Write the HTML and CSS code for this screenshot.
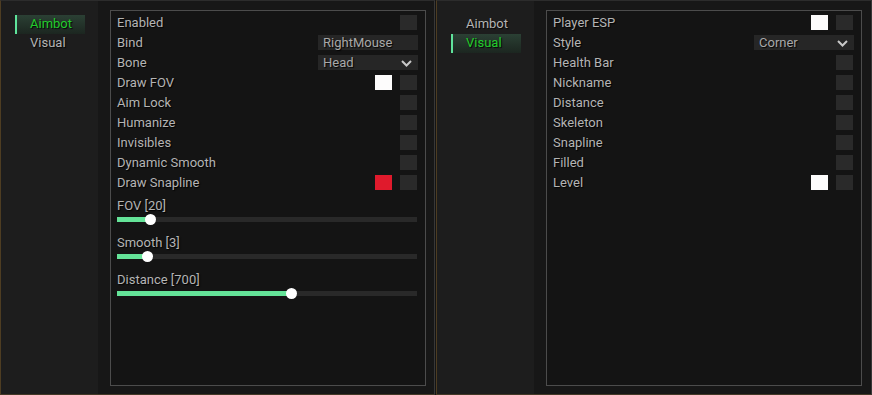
FILE: index.html
```html
<!DOCTYPE html>
<html>
<head>
<meta charset="utf-8">
<link rel="stylesheet" href="styles.css">
</head>
<body>
<div class="desk">
  <div class="window window-left">
    <aside class="sidebar">
      <div class="tab active">Aimbot</div>
      <div class="tab">Visual</div>
    </aside>
    <main class="content">
      <div class="panel">
        <div class="row"><span class="label">Enabled</span><span class="check"></span></div>
        <div class="row"><span class="label">Bind</span><span class="field">RightMouse</span></div>
        <div class="row"><span class="label">Bone</span><span class="field select">Head<svg class="chev" width="11" height="7" viewBox="0 0 11 7"><polyline points="1,1 5.5,5.5 10,1" fill="none" stroke="#c8c8c8" stroke-width="2"/></svg></span></div>
        <div class="row"><span class="label">Draw FOV</span><span class="swatch white"></span><span class="check"></span></div>
        <div class="row"><span class="label">Aim Lock</span><span class="check"></span></div>
        <div class="row"><span class="label">Humanize</span><span class="check"></span></div>
        <div class="row"><span class="label">Invisibles</span><span class="check"></span></div>
        <div class="row"><span class="label">Dynamic Smooth</span><span class="check"></span></div>
        <div class="row"><span class="label">Draw Snapline</span><span class="swatch red"></span><span class="check"></span></div>
        <div class="slider">
          <div class="slider-label">FOV [20]</div>
          <div class="track"><div class="fill" style="width: 11%"></div><div class="knob" style="left: 11%"></div></div>
        </div>
        <div class="slider">
          <div class="slider-label">Smooth [3]</div>
          <div class="track"><div class="fill" style="width: 10%"></div><div class="knob" style="left: 10%"></div></div>
        </div>
        <div class="slider">
          <div class="slider-label">Distance [700]</div>
          <div class="track"><div class="fill" style="width: 58.3%"></div><div class="knob" style="left: 58.3%"></div></div>
        </div>
      </div>
    </main>
  </div>
  <div class="window window-right">
    <aside class="sidebar">
      <div class="tab">Aimbot</div>
      <div class="tab active">Visual</div>
    </aside>
    <main class="content">
      <div class="panel">
        <div class="row"><span class="label">Player ESP</span><span class="swatch white"></span><span class="check"></span></div>
        <div class="row"><span class="label">Style</span><span class="field select">Corner<svg class="chev" width="11" height="7" viewBox="0 0 11 7"><polyline points="1,1 5.5,5.5 10,1" fill="none" stroke="#c8c8c8" stroke-width="2"/></svg></span></div>
        <div class="row"><span class="label">Health Bar</span><span class="check"></span></div>
        <div class="row"><span class="label">Nickname</span><span class="check"></span></div>
        <div class="row"><span class="label">Distance</span><span class="check"></span></div>
        <div class="row"><span class="label">Skeleton</span><span class="check"></span></div>
        <div class="row"><span class="label">Snapline</span><span class="check"></span></div>
        <div class="row"><span class="label">Filled</span><span class="check"></span></div>
        <div class="row"><span class="label">Level</span><span class="swatch white"></span><span class="check"></span></div>
      </div>
    </main>
  </div>
</div>
</body>
</html>
```
FILE: styles.css
```css
* { box-sizing: border-box; }
html, body { margin: 0; padding: 0; }
body {
  background: #151515;
  font-family: Roboto, "Liberation Sans", sans-serif;
  font-size: 13px;
  color: #b4b4b4;
}
.desk {
  display: flex;
  gap: 1px;
  width: 872px;
  height: 395px;
  background: #141414;
}
.window {
  display: flex;
  height: 395px;
  border: 1px solid #333;
  border-top-color: #2c2c2c;
  border-right-color: #383838;
  border-left-color: #4e3d22;
  border-bottom-color: #433826;
}
.window-left { width: 435px; }
.window-right { width: 436px; }
.sidebar {
  width: 97px;
  flex: none;
  background: #1d1d1d;
  padding: 14px 0 0 14px;
}
.tab {
  width: 70px;
  height: 19px;
  line-height: 18px;
  padding-left: 13px;
  border-left: 2px solid transparent;
  text-shadow: 1px 1px 1px rgba(0,0,0,0.9);
}
.tab.active {
  border-left-color: #5fe39b;
  background: linear-gradient(to bottom, #2b4034, #1c2620);
  color: #22cc2c;
}
.content {
  flex: 1;
  background: #171717;
  padding: 9px 8px 8px 12px;
  display: flex;
}
.window-right .content { padding-right: 9px; }
.panel {
  flex: 1;
  border: 1px solid #4c4c4c;
  background: #141414;
  padding: 2px 8px 0 6px;
}
.row {
  display: flex;
  align-items: flex-start;
  height: 20px;
}
.label {
  flex: 1;
  line-height: 19px;
  text-shadow: 1px 1px 1px rgba(0,0,0,0.9);
}
.check {
  width: 17px;
  height: 15px;
  margin-top: 2px;
  background: #2a2a2a;
}
.swatch {
  width: 17px;
  height: 15px;
  margin-top: 2px;
  margin-right: 8px;
}
.swatch.white { background: #fdfcfc; }
.swatch.red { background: #e01a2c; }
.field {
  width: 100px;
  height: 15px;
  margin-top: 2px;
  margin-right: -1px;
  background: #262626;
  padding-left: 5px;
  line-height: 15px;
  color: #a8a8a8;
  text-shadow: 1px 1px 1px rgba(0,0,0,0.9);
  display: flex;
  align-items: center;
}
.select { justify-content: space-between; padding-right: 6px; }
.chev { flex: none; margin-top: 1px; }
.slider {
  padding-top: 3px;
}
.slider-label {
  height: 20px;
  line-height: 20px;
  text-shadow: 1px 1px 1px rgba(0,0,0,0.9);
}
.track {
  position: relative;
  height: 5px;
  margin-top: 1px;
  margin-bottom: 8px;
  background: #292929;
}
.fill {
  height: 100%;
  background: #64e398;
}
.knob {
  position: absolute;
  top: -3px;
  width: 11px;
  height: 11px;
  margin-left: -5.5px;
  border-radius: 50%;
  background: #ffffff;
}
```
